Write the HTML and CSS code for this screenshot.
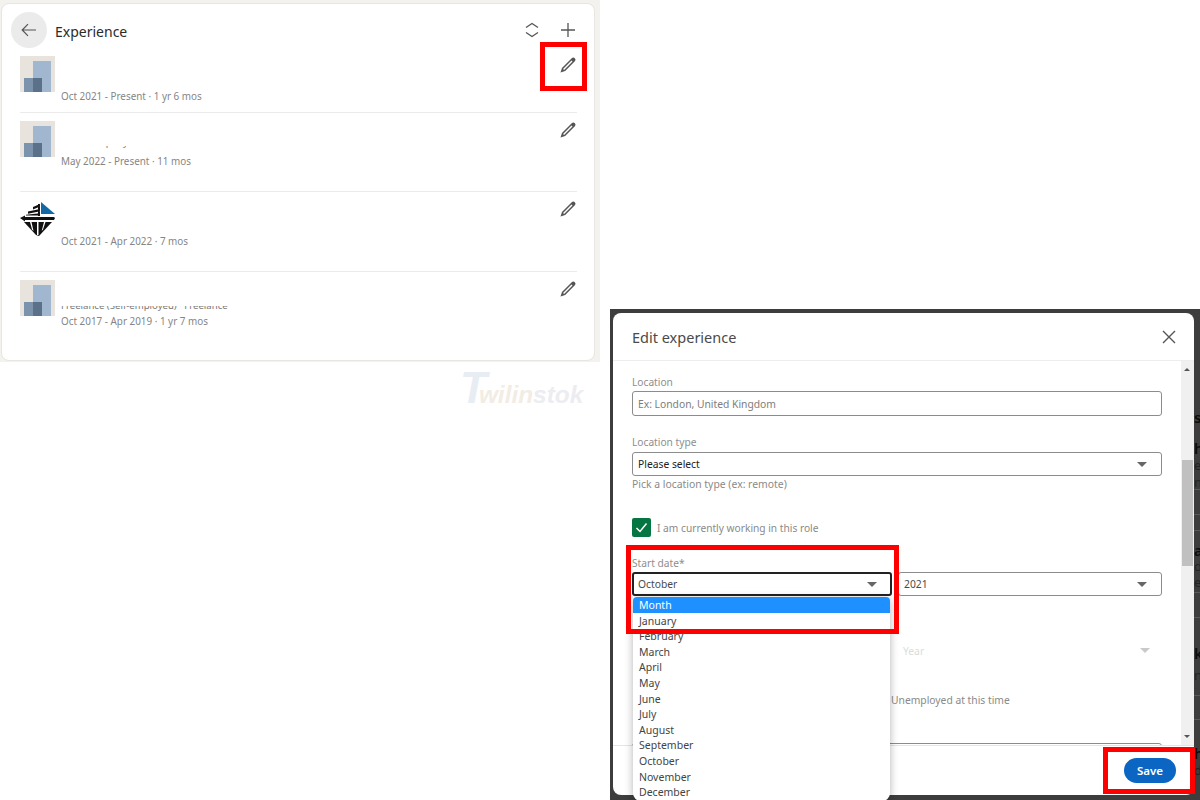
FILE: index.html
```html
<!DOCTYPE html>
<html lang="en">
<head>
<meta charset="utf-8">
<title>Edit experience</title>
<link rel="stylesheet" href="styles.css">
</head>
<body>
<section class="shot-list">
  <div class="card">
    <header class="card-head">
      <button class="back" aria-label="Back"><svg viewBox="0 0 20 20" width="20" height="20"><path d="M17 10H3.2M9 4.2 3.2 10 9 15.8" fill="none" stroke="#555" stroke-width="1.2"/></svg></button>
      <h1 class="card-title">Experience</h1>
      <div class="head-tools">
        <svg viewBox="0 0 16 16" width="16" height="16"><path d="M2 5.5 8 1.5l6 4M2 10.5l6 4 6-4" fill="none" stroke="#555" stroke-width="1.3"/></svg>
        <svg viewBox="0 0 16 16" width="16" height="16"><path d="M8 1v14M1 8h14" fill="none" stroke="#555" stroke-width="1.3"/></svg>
      </div>
    </header>
    <ul class="rows">
      <li class="row row-first">
        <svg class="logo" viewBox="0 0 35 36"><rect width="35" height="36" fill="#e8e3dc"/><rect x="13" y="5" width="18" height="31" fill="#a0b7cf"/><rect x="4" y="22" width="18" height="14" fill="#7c93ad"/><rect x="13" y="22" width="9" height="14" fill="#5b7089"/></svg>
        <div class="meta"><p class="date">Oct 2021 - Present · 1 yr 6 mos</p></div>
        <svg class="pencil" viewBox="0 0 24 24" width="18" height="18"><path d="M21.13 2.86a3 3 0 0 0-4.17 0l-13 13L2 22l6.19-2L21.13 7a3 3 0 0 0 0-4.14zM6.77 18.57l-1.35-1.34L16.64 6 18 7.35z" fill="#555"/></svg>
      </li>
      <li class="row row-second">
        <svg class="logo" viewBox="0 0 35 36"><rect width="35" height="36" fill="#e8e3dc"/><rect x="13" y="5" width="18" height="31" fill="#a0b7cf"/><rect x="4" y="22" width="18" height="14" fill="#7c93ad"/><rect x="13" y="22" width="9" height="14" fill="#5b7089"/></svg>
        <div class="meta meta-cut"><div class="cut"><span class="cut-text cut-short">Company</span></div><p class="date">May 2022 - Present · 11 mos</p></div>
        <svg class="pencil" viewBox="0 0 24 24" width="18" height="18"><path d="M21.13 2.86a3 3 0 0 0-4.17 0l-13 13L2 22l6.19-2L21.13 7a3 3 0 0 0 0-4.14zM6.77 18.57l-1.35-1.34L16.64 6 18 7.35z" fill="#555"/></svg>
      </li>
      <li class="row">
        <svg class="logo" viewBox="0 0 35 36"><path d="M21 2 35 14H21z" fill="#1369a6"/><path d="M13 7l7-3v2.400l-7 3zM8 11.500l12-2.600v2.300L8 13.800zM6 14.800l14-1.600v2.200H6zM18 4h2v12h-2zM0 18l5-2.600V17h29l1 1-1 2H5v1.600z" fill="#111"/><path d="M4 22h28L19 36l-3-1z" fill="#111"/><path d="M10 22h1.500l2 9-1.500-1.600zM17 22h1.500v13H17zM24 22h1.500l-2.500 7.500-1.300 1.400z" fill="#fff"/></svg>
        <div class="meta"><p class="date">Oct 2021 - Apr 2022 · 7 mos</p></div>
        <svg class="pencil" viewBox="0 0 24 24" width="18" height="18"><path d="M21.13 2.86a3 3 0 0 0-4.17 0l-13 13L2 22l6.19-2L21.13 7a3 3 0 0 0 0-4.14zM6.77 18.57l-1.35-1.34L16.64 6 18 7.35z" fill="#555"/></svg>
      </li>
      <li class="row row-last">
        <svg class="logo" viewBox="0 0 35 36"><rect width="35" height="36" fill="#e8e3dc"/><rect x="13" y="5" width="18" height="31" fill="#a0b7cf"/><rect x="4" y="22" width="18" height="14" fill="#7c93ad"/><rect x="13" y="22" width="9" height="14" fill="#5b7089"/></svg>
        <div class="meta meta-cut meta-cut-low"><div class="cut"><span class="cut-text">Freelance (Self-employed) · Freelance</span></div><p class="date">Oct 2017 - Apr 2019 · 1 yr 7 mos</p></div>
        <svg class="pencil" viewBox="0 0 24 24" width="18" height="18"><path d="M21.13 2.86a3 3 0 0 0-4.17 0l-13 13L2 22l6.19-2L21.13 7a3 3 0 0 0 0-4.14zM6.77 18.57l-1.35-1.34L16.64 6 18 7.35z" fill="#555"/></svg>
      </li>
    </ul>
  </div>
  <div class="mark mark-edit"></div>
</section>

<div class="watermark"><span class="wm-t">T</span><span class="wm-a">wilin</span><span class="wm-b">stok</span></div>

<section class="shot-modal">
  <i class="rule r1"></i><i class="rule r2"></i><i class="rule r3"></i><i class="rule r4"></i><i class="rule r5"></i><i class="rule r6"></i><i class="rule r7"></i>
  <span class="ghost g1">s</span><span class="ghost g2">h</span><span class="ghost g3">a</span><span class="ghost g4">k</span><span class="ghost g5">h</span>
  <span class="ghost-dim d1">e</span><span class="ghost-dim d2">n</span><span class="ghost-dim d3">d</span><span class="ghost-dim d4">e</span><span class="ghost-dim d5">n</span><span class="ghost-dim d6">d</span>
  <div class="modal">
    <header class="modal-head">
      <h2 class="modal-title">Edit experience</h2>
      <svg viewBox="0 0 16 16" width="16" height="16"><path d="M2 2l12 12M14 2 2 14" fill="none" stroke="#555" stroke-width="1.4"/></svg>
    </header>
    <div class="modal-main">
      <form class="form">
        <label class="label">Location</label>
        <div class="field field-input"><span class="placeholder">Ex: London, United Kingdom</span></div>
        <label class="label label-gap">Location type</label>
        <div class="field field-select"><span class="value-dark">Please select</span><i class="caret"></i></div>
        <p class="hint">Pick a location type (ex: remote)</p>
        <div class="check-row">
          <span class="check"><svg viewBox="0 0 19 19" width="19" height="19"><path d="M4.500 10l3.500 3.500 6.500-8" fill="none" stroke="#fff" stroke-width="1.500"/></svg></span>
          <span class="check-text">I am currently working in this role</span>
        </div>
        <label class="label label-gap">Start date*</label>
        <div class="date-grid">
          <div class="field field-select field-focus"><span class="value">October</span><i class="caret"></i></div>
          <div class="field field-select"><span class="value">2021</span><i class="caret"></i></div>
        </div>
        <div class="date-grid end-grid">
          <div class="field-off"></div>
          <div class="field-off"><span class="value-off">Year</span><i class="caret caret-off"></i></div>
        </div>
        <p class="unemployed">Unemployed at this time</p>
        <div class="field field-input field-tail"></div>
      </form>
      <div class="scrollbar">
        <i class="sb-up"></i>
        <i class="sb-thumb"></i>
        <i class="sb-down"></i>
      </div>
    </div>
    <footer class="modal-foot"><button class="save">Save</button></footer>
    <ul class="dropdown">
      <li class="opt opt-active">Month</li>
      <li class="opt">January</li>
      <li class="opt">February</li>
      <li class="opt">March</li>
      <li class="opt">April</li>
      <li class="opt">May</li>
      <li class="opt">June</li>
      <li class="opt">July</li>
      <li class="opt">August</li>
      <li class="opt">September</li>
      <li class="opt">October</li>
      <li class="opt">November</li>
      <li class="opt">December</li>
    </ul>
  </div>
  <div class="mark mark-date"></div>
  <div class="mark mark-save"></div>
</section>
</body>
</html>
```

FILE: styles.css
```css
* { box-sizing: border-box; }
html, body { margin: 0; height: 100%; }
body {
  position: relative;
  width: 1200px;
  height: 800px;
  overflow: hidden;
  background: #fff;
  font-family: "Noto Sans", "Open Sans", sans-serif;
  color: #555;
}
h1, h2, p, ul { margin: 0; padding: 0; }
ul { list-style: none; }

/* Left screenshot */
.shot-list {
  position: absolute;
  left: 0;
  top: 0;
  width: 600px;
  height: 362px;
  background: #f4f2ee;
  padding: 3px 5px 1px 1px;
}
.card {
  height: 358px;
  background: #fff;
  border: 1px solid #e8e6e1;
  border-radius: 8px;
  padding: 8px 17px 0 9px;
}
.card-head {
  display: flex;
  align-items: center;
  height: 36px;
  margin-bottom: 8px;
}
.back {
  width: 36px;
  height: 36px;
  border: 0;
  padding: 0;
  border-radius: 50%;
  background: #ebebeb;
  display: flex;
  align-items: center;
  justify-content: center;
}
.card-title {
  margin: 2px 0 0 8px;
  font-size: 14px;
  font-weight: 400;
  color: #2b2b2b;
}
.head-tools {
  margin-left: auto;
  margin-right: 1px;
  display: flex;
  gap: 20px;
}
.rows { margin-left: 9px; }
.row {
  display: flex;
  align-items: flex-start;
  padding: 0 0 23px;
  margin-bottom: 8px;
  border-bottom: 1px solid #ebebeb;
}
.row-first { padding-bottom: 9px; }
.row-last { border-bottom: 0; }
.logo { width: 35px; height: 36px; flex: none; }
.meta { flex: 1; padding: 34px 0 0 6px; }
.row-first .meta { padding-top: 33px; }
.meta-cut { padding-top: 25px; }
.meta-cut-low { padding-top: 26px; }
.cut {
  position: relative;
  height: 5px;
  margin-bottom: 3px;
  overflow: hidden;
}
.cut-text {
  position: absolute;
  left: 0;
  top: -7px;
  font-size: 9.6px;
  line-height: 14px;
  color: #777;
  white-space: nowrap;
}
.cut-short { left: 24px; top: -10px; }
.date {
  font-size: 9.9px;
  line-height: 14px;
  color: #858585;
  white-space: nowrap;
}
.pencil { flex: none; }

.watermark {
  position: absolute;
  left: 460px;
  top: 366px;
  font-weight: 700;
  font-style: italic;
  font-size: 24.4px;
  line-height: 44px;
  white-space: nowrap;
  font-family: "Liberation Sans", sans-serif;
}
.wm-t { font-size: 44px; color: #e7edf3; margin-right: -8px; }
.wm-a { color: #f3ece4; }
.wm-b { color: #ececf1; }

/* Right screenshot */
.shot-modal {
  position: absolute;
  left: 610px;
  top: 309px;
  width: 590px;
  height: 491px;
  background: #3d3d3d;
}
.rule {
  position: absolute;
  left: 584px;
  width: 6px;
  height: 1px;
  background: #5a5a5a;
}
.r1 { top: 180px; }
.r2 { top: 205px; }
.r3 { top: 221px; }
.r4 { top: 283px; }
.r5 { top: 308px; }
.r6 { top: 386px; }
.r7 { top: 410px; }
.ghost {
  position: absolute;
  left: 584px;
  font-size: 15px;
  font-weight: 600;
  line-height: 16px;
  color: #0c0c0c;
}
.g1 { top: 100px; }
.g2 { top: 131px; }
.g3 { top: 233px; }
.g4 { top: 336px; }
.g5 { top: 436px; }
.ghost-dim {
  position: absolute;
  left: 584px;
  font-size: 13px;
  line-height: 14px;
  color: #232323;
}
.d1 { top: 149px; }
.d2 { top: 166px; }
.d3 { top: 250px; }
.d4 { top: 266px; }
.d5 { top: 359px; }
.d6 { top: 454px; }

.modal {
  position: absolute;
  left: 3px;
  top: 4px;
  width: 581px;
  height: 482px;
  background: #fff;
  border-radius: 8px;
  display: flex;
  flex-direction: column;
}
.modal-head {
  flex: none;
  height: 48px;
  display: flex;
  align-items: center;
  justify-content: space-between;
  padding: 0 17px 0 19px;
  border-bottom: 1px solid #ededed;
}
.modal-title {
  font-size: 14.5px;
  font-weight: 400;
  color: #4a4a4a;
}
.modal-main {
  flex: 1;
  min-height: 0;
  display: flex;
  overflow: hidden;
}
.form {
  width: 568px;
  padding: 14px 19px 0;
  overflow: hidden;
}
.label {
  display: block;
  font-size: 10.2px;
  line-height: 14px;
  color: #8e8e8e;
}
.label-gap { margin-top: 19px; }
.field {
  display: flex;
  align-items: center;
  justify-content: space-between;
  border: 1px solid #8c8c8c;
  border-radius: 3px;
  padding: 0 14px 0 5px;
  font-size: 10.3px;
}
.field-input { height: 25px; margin-top: 2px; width: 530px; }
.field-select { height: 24px; margin-top: 3px; }
.field-focus { border: 2px solid #222; padding: 0 13px 0 4px; }
.placeholder { color: #7d7d7d; }
.value-dark { color: #222; }
.value { color: #4a4a4a; }
.caret {
  width: 0;
  height: 0;
  border-left: 5px solid transparent;
  border-right: 5px solid transparent;
  border-top: 5px solid #666;
}
.caret-off { border-top-color: #c9c9c9; }
.hint {
  font-size: 10.4px;
  line-height: 14px;
  margin-top: 1px;
  color: #8a8a8a;
}
.check-row {
  display: flex;
  align-items: center;
  gap: 6px;
  margin-top: 27px;
}
.check {
  width: 19px;
  height: 19px;
  border-radius: 2px;
  background: #057642;
  display: block;
}
.check svg { display: block; }
.check-text { font-size: 10.2px; color: #8a8a8a; }
.date-grid {
  display: grid;
  grid-template-columns: 260px 264px;
  gap: 6px;
  width: 530px;
}
.date-grid .field-select { margin-top: 2px; }
.end-grid { margin-top: 42px; }
.field-off {
  height: 25px;
  display: flex;
  align-items: center;
  justify-content: space-between;
  padding: 0 12px 0 5px;
  font-size: 10.3px;
}
.value-off { color: #dcdcdc; }
.unemployed {
  font-size: 10.3px;
  line-height: 14px;
  margin: 30px 0 0 259px;
  color: #8a8a8a;
}
.field-tail { margin-top: 36px; }
.scrollbar {
  position: relative;
  width: 13px;
  background: #f0f0f0;
}
.sb-up, .sb-down {
  position: absolute;
  left: 3px;
  width: 0;
  height: 0;
  border-left: 3px solid transparent;
  border-right: 3px solid transparent;
}
.sb-up { top: 7px; border-bottom: 3px solid #555; }
.sb-down { bottom: 7px; border-top: 3px solid #555; }
.sb-thumb {
  position: absolute;
  left: 1px;
  top: 99px;
  width: 11px;
  height: 106px;
  background: #c0c0c0;
}
.modal-foot {
  flex: none;
  height: 50px;
  display: flex;
  align-items: center;
  justify-content: flex-end;
  padding-right: 18px;
  border-top: 1px solid #e4e4e4;
}
.save {
  width: 52px;
  height: 25px;
  border: 0;
  border-radius: 13px;
  padding: 0;
  background: #0a66c2;
  color: #fff;
  font-family: inherit;
  font-size: 11.5px;
  font-weight: 600;
}
.dropdown {
  position: absolute;
  left: 20px;
  top: 284px;
  width: 257px;
  height: 204px;
  background: #fff;
  border-radius: 4px 4px 8px 8px;
  box-shadow: 0 2px 8px rgba(0, 0, 0, .3);
  overflow: hidden;
}
.opt {
  height: 15.6px;
  padding-left: 6px;
  font-size: 10.5px;
  line-height: 16px;
  color: #444;
}
.opt-active { background: #1e90ff; color: #fff; }

/* Red annotations */
.mark {
  position: absolute;
  border: 5px solid #f00;
}
.mark-edit { left: 540px; top: 42px; width: 47px; height: 49px; }
.mark-date { left: 16px; top: 236px; width: 273px; height: 89px; }
.mark-save { left: 493px; top: 438px; width: 92px; height: 47px; }
```
